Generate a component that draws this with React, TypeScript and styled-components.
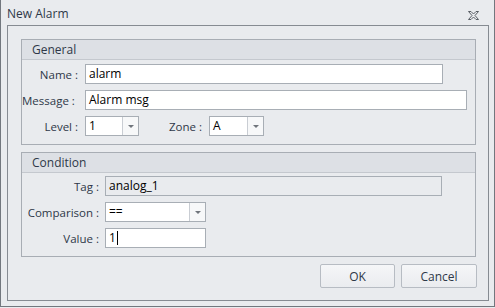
import React from 'react';
import styled, { createGlobalStyle } from 'styled-components';

const GlobalStyle = createGlobalStyle`
  html, body {
    margin: 0;
    padding: 0;
    background: #e9ebee;
  }
  body {
    font-family: "Open Sans", "Noto Sans", sans-serif;
    font-size: 11.5px;
  }
`;

const Window = styled.div`
  width: 495px;
  height: 307px;
  box-sizing: border-box;
  border: 1px solid #72777e;
  border-top: none;
  background: #e9ebee;
  display: flex;
  flex-direction: column;
`;

const TitleBar = styled.div`
  height: 25px;
  box-sizing: border-box;
  padding: 5px 15px 0 6px;
  display: flex;
  justify-content: space-between;
  line-height: 18px;
  font-size: 12px;
  color: #2e3848;
`;

const CloseButton = styled.div`
  width: 11px;
  height: 9px;
  margin-top: 6px;
  display: flex;
`;

const Frame = styled.div`
  flex: 1;
  margin: 0 5px 5px 6px;
  border: 1px solid #868b92;
  padding: 13px 12px 11px 13px;
  display: flex;
  flex-direction: column;
  gap: 7px;
`;

const Group = styled.div`
  border: 1px solid #a8adb4;
`;

const GroupHeader = styled.div`
  height: 19px;
  line-height: 19px;
  padding-left: 10px;
  background: #dde0e5;
  border-bottom: 1px solid #c4c8ce;
  font-size: 12px;
  color: #2e3848;
`;

const GroupBody = styled.div<{ $top: number }>`
  padding: ${p => p.$top}px 8px 8px 0;
  display: flex;
  flex-direction: column;
  gap: 6px;
`;

const Row = styled.div`
  display: flex;
  align-items: center;
  height: 20px;
`;

const Label = styled.div<{ $width: number; $gap: number }>`
  width: ${p => p.$width}px;
  box-sizing: border-box;
  padding-right: ${p => p.$gap}px;
  text-align: right;
  white-space: nowrap;
  color: #2e3848;
  flex-shrink: 0;
`;

const Input = styled.div<{ $width: number; $readOnly?: boolean }>`
  width: ${p => p.$width}px;
  height: 20px;
  box-sizing: border-box;
  border: 1px solid #a8aeb5;
  background: ${p => (p.$readOnly ? '#e9ebee' : '#ffffff')};
  padding: 0 3px;
  line-height: 18px;
  font-size: 12px;
  color: #000;
  display: flex;
  align-items: center;
`;

const Caret = styled.span`
  display: inline-block;
  width: 1px;
  height: 14px;
  background: #000;
  margin-left: 1px;
`;

const Combo = styled.div<{ $width: number }>`
  width: ${p => p.$width}px;
  height: 20px;
  box-sizing: border-box;
  border: 1px solid #a8aeb5;
  background: #fff;
  display: flex;
`;

const ComboText = styled.div`
  flex: 1;
  padding-left: 3px;
  line-height: 18px;
  font-size: 12px;
  color: #000;
`;

const ComboButton = styled.div`
  width: 15px;
  border-left: 1px solid #c9cdd3;
  background: #f7f8f9;
  display: flex;
  align-items: center;
  justify-content: center;

  &::after {
    content: '';
    border-left: 3px solid transparent;
    border-right: 3px solid transparent;
    border-top: 3px solid #70757c;
  }
`;

const Buttons = styled.div`
  display: flex;
  justify-content: flex-end;
  gap: 6px;
  margin-right: -1px;
`;

const Button = styled.button<{ $width: number }>`
  width: ${p => p.$width}px;
  height: 24px;
  border: 1px solid #b7bcc3;
  border-radius: 2px;
  background: linear-gradient(#f5f6f8, #eaecef);
  font-family: inherit;
  font-size: 12px;
  color: #2e3848;
  padding: 0;
`;

export default function App() {
  return (
    <>
      <GlobalStyle />
      <Window>
        <TitleBar>
          <span>New Alarm</span>
          <CloseButton>
            <svg width="11" height="9" viewBox="0 0 11 9">
              <polygon
                points="0.5,0.5 3,0.5 5.5,3 8,0.5 10.5,0.5 7,4.5 10.5,8.5 8,8.5 5.5,6 3,8.5 0.5,8.5 4,4.5"
                fill="none"
                stroke="#5a5f66"
                strokeWidth="1"
              />
            </svg>
          </CloseButton>
        </TitleBar>
        <Frame>
          <Group>
            <GroupHeader>General</GroupHeader>
            <GroupBody $top={4}>
              <Row>
                <Label $width={63} $gap={7}>Name :</Label>
                <Input $width={358}>alarm</Input>
              </Row>
              <Row>
                <Label $width={63} $gap={13}>Message :</Label>
                <Input $width={385}>Alarm msg</Input>
              </Row>
              <Row>
                <Label $width={63} $gap={7}>Level :</Label>
                <Combo $width={54}>
                  <ComboText>1</ComboText>
                  <ComboButton />
                </Combo>
                <Label $width={70} $gap={7}>Zone :</Label>
                <Combo $width={55}>
                  <ComboText>A</ComboText>
                  <ComboButton />
                </Combo>
              </Row>
            </GroupBody>
          </Group>
          <Group>
            <GroupHeader>Condition</GroupHeader>
            <GroupBody $top={3}>
              <Row>
                <Label $width={83} $gap={6}>Tag :</Label>
                <Input $width={337} $readOnly>analog_1</Input>
              </Row>
              <Row>
                <Label $width={83} $gap={6}>Comparison :</Label>
                <Combo $width={101}>
                  <ComboText>==</ComboText>
                  <ComboButton />
                </Combo>
              </Row>
              <Row>
                <Label $width={83} $gap={6}>Value :</Label>
                <Input $width={101}>
                  1<Caret />
                </Input>
              </Row>
            </GroupBody>
          </Group>
          <Buttons>
            <Button $width={75}>OK</Button>
            <Button $width={76}>Cancel</Button>
          </Buttons>
        </Frame>
      </Window>
    </>
  );
}
